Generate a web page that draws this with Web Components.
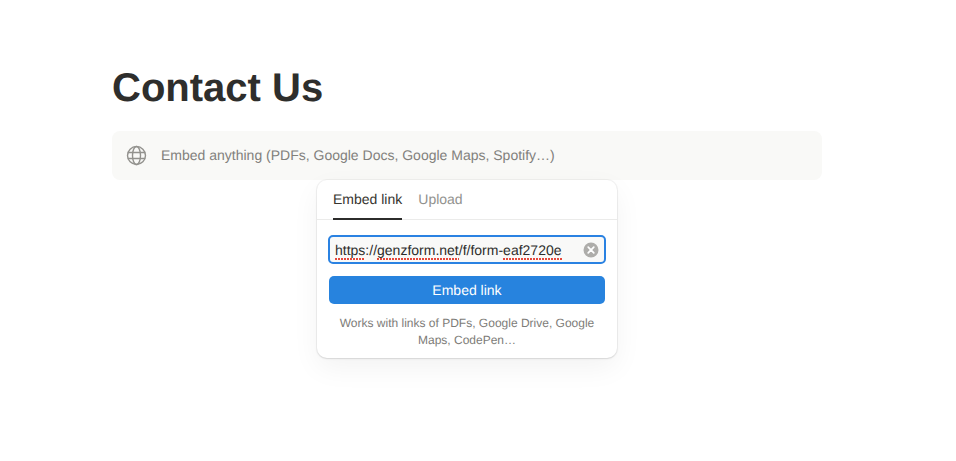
<!DOCTYPE html>
<html>
<head>
<meta charset="utf-8">
<title>Contact Us</title>
<style>
  html, body { margin: 0; background: #fff; }
  body { font-family: "Liberation Sans", Arial, sans-serif; color: #2e2e2c; text-rendering: geometricPrecision; }
</style>
</head>
<body>
<page-shell>
  <page-title>Contact Us</page-title>
  <embed-block>
    Embed anything (PDFs, Google Docs, Google Maps, Spotify…)
    <embed-popover slot="popover"></embed-popover>
  </embed-block>
</page-shell>

<script>
// Page column
class PageShell extends HTMLElement {
  constructor() {
    super();
    this.attachShadow({ mode: 'open' }).innerHTML = `
      <style>
        :host { display: block; height: 461px; box-sizing: border-box; padding: 63px 134px 0 112px; overflow: hidden; }
      </style>
      <slot></slot>
    `;
  }
}

class PageTitle extends HTMLElement {
  constructor() {
    super();
    this.attachShadow({ mode: 'open' }).innerHTML = `
      <style>
        :host { display: block; font-size: 40px; line-height: 50px; font-weight: 700; color: #2e2e2c; margin-bottom: 18px; }
      </style>
      <slot></slot>
    `;
  }
}

// Empty embed placeholder with the popover hanging below it
class EmbedBlock extends HTMLElement {
  constructor() {
    super();
    this.attachShadow({ mode: 'open' }).innerHTML = `
      <style>
        :host { display: block; position: relative; }
        .bar {
          display: flex;
          align-items: center;
          gap: 14px;
          height: 49px;
          padding: 0 14px;
          background: #f9f9f7;
          border-radius: 8px;
          font-size: 14px;
          color: #81807c;
        }
        .bar span { margin-bottom: 2px; }
        svg { width: 21px; height: 21px; flex: 0 0 21px; }
        .popover { position: absolute; top: 49px; left: 205px; }
      </style>
      <div class="bar">
        <svg viewBox="0 0 21 21" fill="none" stroke="#93928e" stroke-width="1.4">
          <circle cx="10.5" cy="10.5" r="9"/>
          <ellipse cx="10.5" cy="10.5" rx="4" ry="9"/>
          <path d="M1.8 7.5h17.4M1.8 13.5h17.4"/>
        </svg>
        <span><slot></slot></span>
      </div>
      <div class="popover"><slot name="popover"></slot></div>
    `;
  }
}

class EmbedPopover extends HTMLElement {
  constructor() {
    super();
    this.attachShadow({ mode: 'open' }).innerHTML = `
      <style>
        :host {
          display: block;
          width: 300px;
          box-sizing: border-box;
          background: #fff;
          border-radius: 10px;
          box-shadow: 0 0 0 1px rgba(0,0,0,0.04), 0 1px 2px rgba(0,0,0,0.1), 0 10px 28px rgba(0,0,0,0.05);
          font-size: 14px;
        }
        .tabs { display: flex; gap: 16px; height: 39px; padding: 0 16px; border-bottom: 1px solid #ebebea; }
        .tab { line-height: 39px; color: #91918e; box-sizing: border-box; height: 40px; }
        .tab.active { color: #37352f; border-bottom: 2px solid #2c2c2b; }
        .body { padding: 15px 12px 9px; display: flex; flex-direction: column; }
        .field {
          display: flex;
          align-items: center;
          justify-content: space-between;
          box-sizing: border-box;
          height: 29px;
          margin: 0 -1px;
          padding: 0 5px;
          border: 2px solid #2a82e2;
          border-radius: 5px;
          background: #f9f9f8;
          color: #2e2e2c;
          white-space: nowrap;
        }
        /* spellcheck dots, the native squiggle cannot be styled */
        .sp {
          padding-bottom: 2px;
          background: linear-gradient(90deg, #e5483c 2px, transparent 2px) 0 100% / 3px 2px repeat-x;
        }
        .clear { width: 16px; height: 16px; flex: 0 0 16px; }
        button {
          margin-top: 12px;
          height: 28px;
          border: 0;
          border-radius: 5px;
          background: #2783de;
          color: #fff;
          font: inherit;
          text-rendering: inherit;
          padding: 0;
        }
        .hint { margin-top: 11px; font-size: 12px; line-height: 17px; color: #7d7c78; text-align: center; }
      </style>
      <div class="tabs">
        <div class="tab active">Embed link</div>
        <div class="tab">Upload</div>
      </div>
      <div class="body">
        <div class="field">
          <span><span class="sp">https</span>://<span class="sp">genzform.net</span>/f/form-<span class="sp">eaf2720e</span></span>
          <svg class="clear" viewBox="0 0 16 16">
            <circle cx="8" cy="8" r="7.5" fill="#aeadaa"/>
            <path d="M5.2 5.2l5.6 5.6M10.8 5.2l-5.6 5.6" stroke="#fff" stroke-width="1.7" stroke-linecap="round"/>
          </svg>
        </div>
        <button>Embed link</button>
        <div class="hint">Works with links of PDFs, Google Drive, Google Maps, CodePen…</div>
      </div>
    `;
  }
}

customElements.define('page-shell', PageShell);
customElements.define('page-title', PageTitle);
customElements.define('embed-block', EmbedBlock);
customElements.define('embed-popover', EmbedPopover);
</script>
</body>
</html>
